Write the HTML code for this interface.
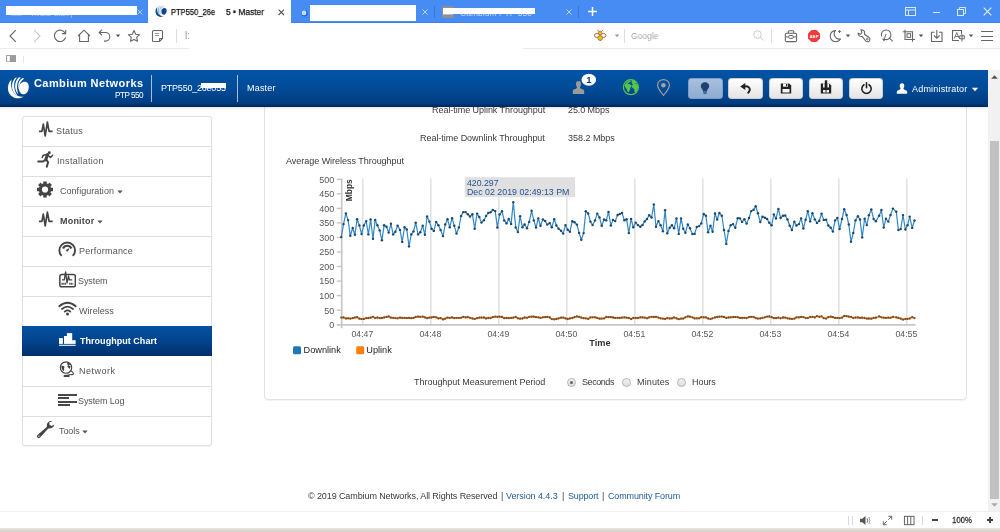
<!DOCTYPE html>
<html><head><meta charset="utf-8"><title>PTP550 • Master</title>
<style>
*{box-sizing:border-box;margin:0;padding:0}
html,body{width:1000px;height:532px;overflow:hidden;background:#fff}
body{position:relative;font-family:"Liberation Sans",sans-serif;font-size:11px;color:#333}
.abs{position:absolute}
.t{position:absolute;white-space:nowrap;line-height:1;will-change:transform}
/* browser chrome */
#tabbar{left:0;top:0;width:1000px;height:23px;background:#478cf2;border-bottom:1px solid #3a82ee}
#acttab{left:148px;top:0;width:143px;height:23px;background:#fff}
.red{position:absolute;background:#fff}
#toolbar{left:0;top:23px;width:1000px;height:25px;background:#fff}
.hl{position:absolute;height:1px;background:#ebebeb}
#bm{left:0;top:49px;width:1000px;height:20px;background:#fff}
/* app header */
#hdr{left:0;top:70px;width:988px;height:37px;background:linear-gradient(#0353a6 0%,#024b98 50%,#003c80 90%,#002a60 97%,#002a60 100%);box-shadow:0 1px 2px rgba(0,0,0,.13)}
.sep{position:absolute;width:1px;background:#a9bcd9;top:74.500px;height:27px}
.hbtn{position:absolute;top:78.300px;width:34.300px;height:20.300px;border-radius:3px;background:linear-gradient(#fff,#e4e4e4);border:1px solid #ccc}
/* sidebar */
#side{left:22px;top:115.600px;width:190.400px;height:330.500px;border:1px solid #e0e0e0;border-radius:3px;background:#fff;box-shadow:0 1px 1px rgba(0,0,0,.05)}
.mi{position:absolute;left:0;width:187px;height:30px;border-bottom:1px solid #ddd}
.mi.act{background:linear-gradient(#0a4a9c,#003b80);border-color:#003b80}
/* main panel */
#panel{left:263.500px;top:100px;width:703px;height:299.500px;border:1px solid #e2e2e2;border-radius:4px;background:#fff;box-shadow:0 1px 1px rgba(0,0,0,.05)}
/* scrollbar */
#sb{left:988px;top:70px;width:12px;height:441px;background:#f1f1f1}
#thumb{left:990px;top:141px;width:9px;height:358px;background:#c1c1c1}
/* status bar */
#status{left:0;top:511px;width:1000px;height:17px;background:#fff;border-top:1px solid #f0f0f0}
#bottom{left:0;top:528px;width:1000px;height:4px;background:linear-gradient(#e9e7e4,#d4d0c8)}
a{color:#1d5a9e;text-decoration:none}
svg{will-change:transform}
.radio{width:9px;height:9px;border-radius:50%;border:1px solid #b4b4b4;background:linear-gradient(#f4f4f4,#dcdcdc)}
.radio i{position:absolute;left:1.700px;top:1.700px;width:3.600px;height:3.600px;border-radius:50%;background:#606060}
</style></head>
<body>
<!-- ===== browser chrome ===== -->
<div id="tabbar" class="abs"></div>
<div id="acttab" class="abs"></div>
<!-- tab 1 (inactive, redacted) -->
<div class="t" style="left:30px;top:9.500px;font-size:7.300px;color:#b4cdf9;letter-spacing:0">Vivaldi Start |</div>
<svg class="abs" style="left:11px;top:6px" width="11" height="10" viewBox="0 0 11 10"><rect x="0.5" y="0.5" width="10" height="8.500" fill="none" stroke="#a9c6f8"/></svg>
<div class="red" style="left:6px;top:6px;width:131px;height:8.700px"></div>
<svg class="abs" style="left:136.500px;top:9px" width="6" height="6" viewBox="0 0 6 6"><path d="M.5.5l5 5M5.500.5l-5 5" stroke="#b9d1fa" stroke-width=".9" fill="none"/></svg>
<!-- active tab -->
<svg class="abs" style="left:155px;top:5.400px" width="12.300" height="12.300" viewBox="0 0 23 23"><path d="M4.600 3.600C1.500 6.500.3 10.500 1.200 14.500 2.300 19.500 7 23 12 22.200 14 21.900 15.600 21.400 16.700 20.800 13 21.200 9 20 6.500 16.500 4 13 3.500 8 4.600 3.600z" fill="#0c4a92"/><path d="M8.500 1.800C5 5 4.200 10 5.800 14.500 6.800 17 8.500 18.800 10.500 19.800 8.300 16.500 6.800 12 7.200 8 7.400 5.500 8.200 3.500 10 1.600z" fill="#8fa9d0"/><path d="M12 1.200C8.500 4 7.500 9 8.600 13.500 9.200 15.500 10 17 11.400 18.400 10.200 15 9.600 11 10.400 7.500 10.900 5 12 3 13.800 1.400z" fill="#a9bddb"/><path d="M15.500 2C12.500 3.800 11 7 11.200 10.500 11.300 12 11.600 13 12.100 14 12 11 12.500 8 14 5.800 15 4.300 16 3.400 17.300 2.700z" fill="#b9c9e2"/><path d="M16 6C19 5.200 21.600 6.800 21.800 10 22 13.500 20.500 17.500 17.500 18.200 14.500 18.800 12.200 16.500 12 13 11.800 9.500 13.300 6.700 16 6z" fill="#0a4690"/></svg>
<div class="t" id="tab_a" style="left:171px;top:8px;font-size:8.500px;color:#111;-webkit-text-stroke:.25px #111;transform-origin:0 0;transform:scaleX(.887)">PTP550_26e</div>
<div class="t" id="tab_b" style="left:226px;top:8px;font-size:8.500px;color:#111;-webkit-text-stroke:.25px #111;transform-origin:0 0;transform:scaleX(.99)">5 • Master</div>
<div class="red" style="left:215px;top:3px;width:11px;height:16px"></div>
<svg class="abs" style="left:278px;top:9px" width="7" height="7" viewBox="0 0 7 7"><path d="M.6.600l5.400 5.400M6 .6L.6 6" stroke="#555" stroke-width="1.100" fill="none"/></svg>
<!-- tab 3 -->
<svg class="abs" style="left:300.800px;top:7.400px" width="7" height="9.800" viewBox="0 0 7 9.800"><path d="M3.500 .2C4.600 2.200 6.700 4 6.700 6.200A3.200 3.300 0 0 1 .3 6.200C.3 4 2.400 2.200 3.500 .2z" fill="#2b62dc"/><path d="M3.500 .2C4.300 1.700 5.300 2.800 5.900 4 4.500 3 2.800 3 1.300 3.800 2 2.500 2.900 1.400 3.500 .2z" fill="#3aa2f2"/><circle cx="3" cy="5.900" r="2.300" fill="#d6edfb"/><path d="M4.300 5H2.600a1.100 1.100 0 0 0 0 2h1.500" stroke="#8cc4f3" stroke-width=".7" fill="none"/></svg>
<div class="red" style="left:309.500px;top:5px;width:106.500px;height:16px"></div>
<svg class="abs" style="left:422.300px;top:8.500px" width="6" height="6" viewBox="0 0 6 6"><path d="M.4.400l5.200 5.200M5.600.4L.4 5.600" stroke="#c6d9fb" stroke-width=".9" fill="none"/></svg>
<div class="abs" style="left:434px;top:6px;width:1px;height:12px;background:#3b78d8"></div>
<!-- tab 4 -->
<svg class="abs" style="left:442px;top:6px" width="12" height="12" viewBox="0 0 12 12"><rect x="0" y="0" width="12" height="12" fill="#8a8f98"/><path d="M1 8h10M3 6.500c1-1 2-1 3 0s2 1 3 0" stroke="#e8e8e8" stroke-width="1" fill="none"/></svg>
<div class="t" id="tab_d" style="left:460px;top:9px;font-size:8.500px;color:#c9dcfb;letter-spacing:0.023px">Cambium PTP 550</div>
<div class="red" style="left:443px;top:8px;width:92px;height:5.500px"></div>
<svg class="abs" style="left:566.300px;top:8.500px" width="6" height="6" viewBox="0 0 6 6"><path d="M.4.400l5.200 5.200M5.600.4L.4 5.600" stroke="#c6d9fb" stroke-width=".9" fill="none"/></svg>
<div class="abs" style="left:578px;top:6px;width:1px;height:12px;background:#3b78d8"></div>
<svg class="abs" style="left:588px;top:7px" width="9" height="9" viewBox="0 0 9 9"><path d="M4.500 0v9M0 4.500h9" stroke="#fff" stroke-width="1.500" fill="none"/></svg>
<!-- window controls -->
<svg class="abs" style="left:905px;top:7px" width="11" height="9" viewBox="0 0 11 9"><rect x=".5" y=".5" width="10" height="8" fill="none" stroke="#dbe7fc"/><path d="M.5 3h10M3.500 3v5.500" stroke="#dbe7fc" fill="none"/></svg>
<div class="abs" style="left:933px;top:12px;width:7px;height:1px;background:#dbe7fc"></div>
<svg class="abs" style="left:957px;top:7px" width="10" height="9" viewBox="0 0 10 9"><rect x=".5" y="2.500" width="6" height="6" fill="none" stroke="#dbe7fc"/><path d="M2.500 2.500V.5h6v6h-2" stroke="#dbe7fc" fill="none"/></svg>
<svg class="abs" style="left:983px;top:7px" width="9" height="9" viewBox="0 0 9 9"><path d="M.7.700l7.600 7.600M8.300.700L.7 8.300" stroke="#e6effd" stroke-width="1.100" fill="none"/></svg>

<div id="toolbar" class="abs"></div>
<div class="hl" style="left:0;top:48px;width:189px"></div>
<div class="hl" style="left:523px;top:48px;width:477px"></div>
<div id="bm" class="abs"></div>
<!-- left nav icons -->
<svg class="abs" style="left:8px;top:28px" width="10" height="16" viewBox="0 0 10 16"><path d="M7.800 2.200L2 8l5.800 5.800" stroke="#666" stroke-width="1.100" fill="none"/></svg>
<svg class="abs" style="left:32px;top:28px" width="10" height="16" viewBox="0 0 10 16"><path d="M2.200 2.200L8 8l-5.800 5.800" stroke="#c6c6c6" stroke-width="1.100" fill="none"/></svg>
<svg class="abs" style="left:52px;top:28px" width="16" height="16" viewBox="0 0 16 16"><path d="M13.200 5.200A5.700 5.700 0 1 0 13.600 9.500" stroke="#666" stroke-width="1.100" fill="none"/><path d="M13.700 2v3.600h-3.600" stroke="#666" stroke-width="1.100" fill="none"/></svg>
<svg class="abs" style="left:76px;top:28px" width="16" height="16" viewBox="0 0 16 16"><path d="M2 8l6-5.800L14 8M3.600 6.800v6.700h8.800V6.800" stroke="#666" stroke-width="1.100" fill="none"/></svg>
<svg class="abs" style="left:97px;top:28px" width="16" height="16" viewBox="0 0 16 16"><path d="M2.200 4.500h6.300a4.300 4.300 0 0 1 0 8.600H7" stroke="#666" stroke-width="1.100" fill="none"/><path d="M5 1.700L2.200 4.500 5 7.300" stroke="#666" stroke-width="1.100" fill="none"/></svg>
<svg class="abs" style="left:115px;top:34px" width="6" height="4" viewBox="0 0 6 4"><path d="M.8.500h4.400L3 3.300z" fill="#555"/></svg>
<svg class="abs" style="left:126px;top:28px" width="16" height="16" viewBox="0 0 16 16"><path d="M8 2.600l1.700 3.600 3.900.5-2.900 2.700.8 3.900L8 11.400l-3.500 1.900.8-3.900-2.900-2.700 3.900-.5z" stroke="#666" stroke-width="1.100" fill="none" stroke-linejoin="round"/></svg>
<svg class="abs" style="left:150px;top:28px" width="16" height="16" viewBox="0 0 16 16"><path d="M3.500 2.500h8a1 1 0 0 1 1 1v7l-3 3h-6a1 1 0 0 1-1-1v-9a1 1 0 0 1 1-1z" stroke="#666" stroke-width="1.100" fill="none"/><path d="M12.500 10.500h-3v3" stroke="#666" stroke-width="1" fill="none"/><path d="M4.800 5.500h4.400M4.800 7.500h4.400" stroke="#999" stroke-width="1" fill="none"/></svg>
<div class="abs" style="left:176px;top:29px;width:1px;height:14px;background:#ddd"></div>
<div class="t" style="left:185px;top:31px;font-size:10px;color:#9a9a9a">l:</div>
<div class="red" style="left:189px;top:24px;width:334px;height:25px"></div>
<!-- bookmark bar -->
<svg class="abs" style="left:6px;top:55.400px" width="10" height="7.300" viewBox="0 0 10 7.300"><rect x=".5" y=".5" width="9" height="6.300" fill="#fff" stroke="#a4a4a4"/><rect x="3.800" y=".3" width="6.200" height="6.700" fill="#9c9c9c"/></svg>
<div class="abs" style="left:23px;top:56px;width:1px;height:7px;background:#e6e6e6"></div>
<!-- right side: search field + extensions -->
<svg class="abs" style="left:593px;top:29px" width="14" height="13" viewBox="0 0 14 13"><path d="M5.900 2.600L4.500.9M8.500 2.600L9.900.9" stroke="#9a5f44" stroke-width=".9" fill="none"/><ellipse cx="4.100" cy="6.500" rx="2.700" ry="2" fill="#fff" stroke="#9a5f44" stroke-width=".9"/><ellipse cx="10.300" cy="6.500" rx="2.700" ry="2" fill="#fff" stroke="#9a5f44" stroke-width=".9"/><circle cx="7.200" cy="4" r="1.900" fill="#f5c400" stroke="#9a5f44" stroke-width=".7"/><ellipse cx="7.200" cy="9" rx="2.500" ry="2.300" fill="#f5c400" stroke="#9a5f44" stroke-width=".7"/><path d="M6 11l1.200 1 1.200-1z" fill="#9a5f44"/></svg>
<svg class="abs" style="left:614px;top:34px" width="6" height="4" viewBox="0 0 6 4"><path d="M.8.500h4.400L3 3.300z" fill="#999"/></svg>
<div class="abs" style="left:624px;top:29px;width:1px;height:14px;background:#ddd"></div>
<div class="t" id="goog" style="left:631px;top:32px;font-size:9px;color:#a8a8a8;transform-origin:0 0;transform:scaleX(.946)">Google</div>
<svg class="abs" style="left:752px;top:29px" width="14" height="14" viewBox="0 0 14 14"><circle cx="5.500" cy="5.500" r="3.800" stroke="#c8c8c8" stroke-width="1" fill="none"/><path d="M8.300 8.300l3.200 3.200" stroke="#c8c8c8" stroke-width="1" fill="none"/></svg>
<div class="abs" style="left:771px;top:29px;width:1px;height:14px;background:#ddd"></div>
<svg class="abs" style="left:783px;top:29px" width="16" height="14" viewBox="0 0 16 14"><rect x="2.300" y="4.300" width="11.300" height="8.300" rx="1.200" stroke="#666" stroke-width="1.050" fill="none"/><path d="M5.300 4.300V2.600a.8.800 0 0 1 .8-.8H9.900a.8.800 0 0 1 .8.800V4.300" stroke="#666" stroke-width="1.050" fill="none"/><path d="M2.300 7.900H5.800M10.100 7.900h3.500" stroke="#666" stroke-width="1" fill="none"/><rect x="5.800" y="6.500" width="4.300" height="2.900" rx=".9" stroke="#666" stroke-width="1" fill="none"/></svg>
<svg class="abs" style="left:807px;top:29px" width="14" height="14" viewBox="0 0 14 14"><path d="M4.500 1h5L13 4.500v5L9.500 13h-5L1 9.500v-5z" fill="#f23c3c"/><text x="7" y="8.800" font-family="Liberation Sans, sans-serif" font-size="4.300" font-weight="bold" fill="#fff" text-anchor="middle">ABP</text></svg>
<svg class="abs" style="left:828px;top:29px" width="15" height="14" viewBox="0 0 15 14"><path d="M7.500 1.500A5.600 5.600 0 1 0 12.500 10 5.200 5.200 0 0 1 7.500 1.500z" stroke="#666" stroke-width="1.100" fill="none" stroke-linejoin="round"/><path d="M11.500 1v3M10 2.500h3" stroke="#666" stroke-width=".9" fill="none"/></svg>
<svg class="abs" style="left:845px;top:34px" width="6" height="4" viewBox="0 0 6 4"><path d="M.8.500h4.400L3 3.300z" fill="#555"/></svg>
<svg class="abs" style="left:857px;top:29px" width="15" height="14" viewBox="0 0 15 14"><path d="M3.900 1C6 .5 8 2 7.600 4.200L7.400 5.200 11.800 8.300A2.450 2.450 0 1 1 8.500 11.800L5.200 7.400C3 8 1 6.500 1 4.100L3.300 5.300 5 3.600z" stroke="#666" stroke-width="1.050" fill="none" stroke-linejoin="round"/><circle cx="10.300" cy="10.100" r=".9" stroke="#666" stroke-width=".9" fill="none"/></svg>
<svg class="abs" style="left:880px;top:29px" width="15" height="14" viewBox="0 0 15 14"><path d="M1.590 7.440A4.800 4.800 0 1 1 4.400 10.300" stroke="#666" stroke-width="1.050" fill="none"/><path d="M9.500 9.200l3.200 3.200" stroke="#666" stroke-width="1.050" fill="none"/><path d="M6 5L3.900 11" stroke="#666" stroke-width="1" fill="none"/><path d="M1.900 9.600l1.800 2.600 2.300-2z" fill="#666"/></svg>
<svg class="abs" style="left:902px;top:29px" width="14" height="14" viewBox="0 0 14 14"><path d="M3 .8v9.700h10M.8 2.700h9.700v10" stroke="#666" stroke-width="1.100" fill="none"/><rect x="5" y="4.700" width="3.600" height="3.600" stroke="#666" stroke-width="1" fill="none"/></svg>
<svg class="abs" style="left:918px;top:34px" width="6" height="4" viewBox="0 0 6 4"><path d="M.8.500h4.400L3 3.300z" fill="#555"/></svg>
<svg class="abs" style="left:930px;top:29px" width="14" height="14" viewBox="0 0 14 14"><path d="M4.500 3.200H1.500v9.300h10.500V3.200H9" stroke="#666" stroke-width="1.100" fill="none"/><path d="M6.800 1v8M4 6.500l2.800 2.800 2.800-2.800" stroke="#666" stroke-width="1.100" fill="none"/></svg>
<svg class="abs" style="left:951px;top:29px" width="15" height="14" viewBox="0 0 15 14"><path d="M10.500 5V1.500H1.500v10H8" stroke="#666" stroke-width="1.100" fill="none"/><path d="M3.300 9.500L5.800 3.500l2.500 6M4.200 7.500h3.300" stroke="#777" stroke-width="1" fill="none"/><path d="M8.700 6.800h4.600v3H8.700zM11 5.200v7.300" stroke="#666" stroke-width="1" fill="none"/></svg>
<svg class="abs" style="left:968px;top:34px" width="6" height="4" viewBox="0 0 6 4"><path d="M.8.500h4.400L3 3.300z" fill="#555"/></svg>
<div class="abs" style="left:981px;top:31px;width:12px;height:1px;background:#666"></div>
<div class="abs" style="left:981px;top:36px;width:12px;height:1px;background:#666"></div>
<div class="abs" style="left:981px;top:40px;width:12px;height:1px;background:#666"></div>

<!-- ===== page ===== -->
<div id="panel" class="abs"></div>
<div class="t" id="m_ul" style="left:432px;top:106.2px;font-size:9px;color:#3a3a3a;letter-spacing:-0.044px">Real-time Uplink Throughput</div>
<div class="t" id="m_ulv" style="left:567.5px;top:106.2px;font-size:9px;color:#3a3a3a;letter-spacing:-0.081px">25.0 Mbps</div>
<div class="t" id="m_dl" style="left:420.4px;top:133.8px;font-size:9px;color:#3a3a3a;letter-spacing:-0.038px">Real-time Downlink Throughput</div>
<div class="t" id="m_dlv" style="left:567.5px;top:133.8px;font-size:9px;color:#3a3a3a;letter-spacing:-0.023px">358.2 Mbps</div>
<div class="t" id="m_avg" style="left:286px;top:156.9px;font-size:9px;color:#3a3a3a;letter-spacing:-0.027px">Average Wireless Throughput</div>
<div class="t" id="m_per" style="left:413.9px;top:378px;font-size:9px;color:#3a3a3a;letter-spacing:-0.027px">Throughput Measurement Period</div>
<div class="abs radio" style="left:567px;top:378px"><i></i></div>
<div class="t" id="m_sec" style="left:582.4px;top:378px;font-size:9px;color:#3a3a3a;letter-spacing:-0.433px">Seconds</div>
<div class="abs radio" style="left:622px;top:378px"></div>
<div class="t" id="m_min" style="left:636.8px;top:378px;font-size:9px;color:#3a3a3a;letter-spacing:0.141px">Minutes</div>
<div class="abs radio" style="left:677px;top:378px"></div>
<div class="t" id="m_hr" style="left:691.5px;top:378px;font-size:9px;color:#3a3a3a;letter-spacing:-0.063px">Hours</div>
<div class="t" id="f1" style="left:307.6px;top:491.700px;font-size:9px;color:#3a3a3a;letter-spacing:-0.098px">© 2019 Cambium Networks, All Rights Reserved</div>
<div class="t" id="f2" style="left:500.800px;top:491.700px;font-size:9px;color:#3a3a3a">|</div>
<div class="t" id="f3" style="left:506.4px;top:491.700px;font-size:9px;color:#1f5c99;letter-spacing:-0.073px">Version 4.4.3</div>
<div class="t" id="f4" style="left:561.600px;top:491.700px;font-size:9px;color:#3a3a3a">|</div>
<div class="t" id="f5" style="left:568px;top:491.700px;font-size:9px;color:#1f5c99;letter-spacing:-0.162px">Support</div>
<div class="t" id="f6" style="left:601.600px;top:491.700px;font-size:9px;color:#3a3a3a">|</div>
<div class="t" id="f7" style="left:608px;top:491.700px;font-size:9px;color:#1f5c99;letter-spacing:-0.134px">Community Forum</div>

<svg class="abs" style="left:280px;top:170px" width="660" height="195" viewBox="280 170 660 195" font-family="Liberation Sans, sans-serif">
<line x1="362.8" y1="178.500" x2="362.8" y2="324.500" stroke="#dedede" stroke-width="1.400"/>
<line x1="430.8" y1="178.500" x2="430.8" y2="324.500" stroke="#dedede" stroke-width="1.400"/>
<line x1="498.8" y1="178.500" x2="498.8" y2="324.500" stroke="#dedede" stroke-width="1.400"/>
<line x1="566.8" y1="178.500" x2="566.8" y2="324.500" stroke="#dedede" stroke-width="1.400"/>
<line x1="634.8" y1="178.500" x2="634.8" y2="324.500" stroke="#dedede" stroke-width="1.400"/>
<line x1="702.8" y1="178.500" x2="702.8" y2="324.500" stroke="#dedede" stroke-width="1.400"/>
<line x1="770.8" y1="178.500" x2="770.8" y2="324.500" stroke="#dedede" stroke-width="1.400"/>
<line x1="838.8" y1="178.500" x2="838.8" y2="324.500" stroke="#dedede" stroke-width="1.400"/>
<line x1="906.8" y1="178.500" x2="906.8" y2="324.500" stroke="#dedede" stroke-width="1.400"/>
<path d="M341.700 178.600V328.200M336.800 324.9H915.500" stroke="#c6c6c6" stroke-width="1.600" fill="none"/>
<line x1="336.800" y1="310.2" x2="341.700" y2="310.2" stroke="#c6c6c6" stroke-width="1.400"/>
<line x1="336.800" y1="295.6" x2="341.700" y2="295.6" stroke="#c6c6c6" stroke-width="1.400"/>
<line x1="336.800" y1="281.1" x2="341.700" y2="281.1" stroke="#c6c6c6" stroke-width="1.400"/>
<line x1="336.800" y1="266.5" x2="341.700" y2="266.5" stroke="#c6c6c6" stroke-width="1.400"/>
<line x1="336.800" y1="252.0" x2="341.700" y2="252.0" stroke="#c6c6c6" stroke-width="1.400"/>
<line x1="336.800" y1="237.5" x2="341.700" y2="237.5" stroke="#c6c6c6" stroke-width="1.400"/>
<line x1="336.800" y1="222.9" x2="341.700" y2="222.9" stroke="#c6c6c6" stroke-width="1.400"/>
<line x1="336.800" y1="208.4" x2="341.700" y2="208.4" stroke="#c6c6c6" stroke-width="1.400"/>
<line x1="336.800" y1="193.8" x2="341.700" y2="193.8" stroke="#c6c6c6" stroke-width="1.400"/>
<line x1="336.800" y1="179.3" x2="341.700" y2="179.3" stroke="#c6c6c6" stroke-width="1.400"/>
<text x="334.300" y="328.0" font-size="9" fill="#585858" text-anchor="end">0</text>
<text x="334.300" y="313.5" font-size="9" fill="#585858" text-anchor="end">50</text>
<text x="334.300" y="298.9" font-size="9" fill="#585858" text-anchor="end">100</text>
<text x="334.300" y="284.4" font-size="9" fill="#585858" text-anchor="end">150</text>
<text x="334.300" y="269.8" font-size="9" fill="#585858" text-anchor="end">200</text>
<text x="334.300" y="255.3" font-size="9" fill="#585858" text-anchor="end">250</text>
<text x="334.300" y="240.8" font-size="9" fill="#585858" text-anchor="end">300</text>
<text x="334.300" y="226.2" font-size="9" fill="#585858" text-anchor="end">350</text>
<text x="334.300" y="211.7" font-size="9" fill="#585858" text-anchor="end">400</text>
<text x="334.300" y="197.1" font-size="9" fill="#585858" text-anchor="end">450</text>
<text x="334.300" y="182.6" font-size="9" fill="#585858" text-anchor="end">500</text>
<text x="362.40000000000003" y="336.800" font-size="8.700" fill="#585858" text-anchor="middle">04:47</text>
<text x="430.40000000000003" y="336.800" font-size="8.700" fill="#585858" text-anchor="middle">04:48</text>
<text x="498.40000000000003" y="336.800" font-size="8.700" fill="#585858" text-anchor="middle">04:49</text>
<text x="566.4" y="336.800" font-size="8.700" fill="#585858" text-anchor="middle">04:50</text>
<text x="634.4" y="336.800" font-size="8.700" fill="#585858" text-anchor="middle">04:51</text>
<text x="702.4" y="336.800" font-size="8.700" fill="#585858" text-anchor="middle">04:52</text>
<text x="770.4" y="336.800" font-size="8.700" fill="#585858" text-anchor="middle">04:53</text>
<text x="838.4" y="336.800" font-size="8.700" fill="#585858" text-anchor="middle">04:54</text>
<text x="906.4" y="336.800" font-size="8.700" fill="#585858" text-anchor="middle">04:55</text>
<text x="600" y="345.800" font-size="9.200" font-weight="bold" fill="#333" text-anchor="middle">Time</text>
<text transform="translate(352.300,201.200) rotate(-90)" font-size="9.300" font-weight="bold" fill="#333" textLength="22" lengthAdjust="spacingAndGlyphs">Mbps</text>
<rect x="464.800" y="177.200" width="110.200" height="20" fill="#e0e0e0"/>
<text x="467" y="186.400" font-size="8.800" fill="#25528f" id="tt1" textLength="31.600" lengthAdjust="spacingAndGlyphs">420.297</text>
<text x="467" y="194.800" font-size="8.800" fill="#25528f" id="tt2" textLength="102.400" lengthAdjust="spacingAndGlyphs">Dec 02 2019 02:49:13 PM</text>
<polyline fill="none" stroke="#f5831c" stroke-width="1.700" stroke-linejoin="round" points="341.3,317.6 343.5,317.4 345.9,318.5 348.1,318.3 350.3,318.6 352.7,318.2 354.9,317.6 357.1,317.2 359.4,318.7 361.6,319.1 363.8,318.9 366.2,318.2 368.4,318.0 370.6,317.7 373.0,316.8 375.2,318.1 377.4,317.5 379.7,318.2 381.9,318.0 384.1,317.5 386.5,316.9 388.7,316.4 390.9,317.7 393.2,317.8 395.4,318.1 397.6,318.3 400.0,317.6 402.2,317.9 404.6,317.9 406.8,318.1 409.0,317.9 411.3,318.2 413.5,317.9 415.7,316.9 418.1,316.6 420.3,316.8 422.7,316.6 424.9,317.4 427.1,318.2 429.4,317.7 431.6,317.5 433.8,316.9 436.2,317.3 438.4,318.4 440.6,318.1 443.0,319.4 445.2,318.7 447.5,317.6 449.7,317.9 452.1,317.4 454.3,318.2 456.5,317.9 458.9,317.8 461.1,317.8 463.3,316.9 465.6,317.4 467.8,317.1 470.0,317.8 472.4,318.5 474.7,318.9 477.1,318.2 479.3,317.6 481.5,317.7 483.9,317.5 486.1,318.5 488.3,318.0 490.6,318.0 492.8,317.1 495.2,316.6 497.4,316.8 499.6,316.7 502.0,316.9 504.2,318.2 506.5,318.0 508.7,318.2 511.1,317.9 513.3,317.7 515.7,317.0 517.9,318.3 520.1,318.7 522.4,318.5 524.6,317.5 527.0,317.8 529.2,316.9 531.6,316.7 533.8,316.7 536.0,317.2 538.3,317.3 540.5,317.8 542.9,317.3 545.1,317.2 547.3,316.9 549.7,317.5 551.8,319.1 554.2,319.3 556.4,319.0 558.6,318.4 561.0,317.7 563.2,317.6 565.5,318.4 567.7,319.0 569.9,318.4 572.3,318.0 574.5,317.2 576.9,316.4 579.1,316.9 581.3,317.7 583.6,318.2 585.8,318.3 588.2,318.9 590.4,317.4 592.6,317.3 595.0,317.3 597.2,317.9 599.5,318.7 601.7,318.6 604.1,318.4 606.3,317.0 608.5,317.2 610.8,317.2 613.0,317.5 615.2,317.9 617.6,317.8 619.8,317.9 622.0,317.6 624.4,317.3 626.6,317.7 628.8,318.0 631.1,319.0 633.3,318.0 635.7,318.0 637.9,318.0 640.3,317.4 642.5,317.4 644.7,317.7 647.0,318.3 649.2,317.4 651.6,316.8 653.8,317.0 656.0,316.8 658.4,317.6 660.6,318.3 662.9,318.6 665.1,319.0 667.3,318.1 669.7,318.5 671.9,318.4 674.1,317.5 676.5,318.4 678.7,319.2 681.0,318.6 683.2,318.6 685.4,317.3 687.8,316.4 690.0,316.7 692.4,317.3 694.6,318.4 696.8,318.3 699.1,318.3 701.3,317.2 703.7,317.3 705.9,317.4 708.1,318.5 710.5,319.0 712.6,318.3 715.0,317.5 717.2,317.0 719.4,316.6 721.8,316.6 724.0,317.0 726.3,317.9 728.5,317.5 730.7,317.3 733.1,317.2 735.3,317.1 737.7,317.2 739.9,317.9 742.1,318.0 744.4,317.8 746.6,318.1 749.0,317.1 751.2,316.8 753.6,317.0 755.7,318.1 757.9,318.6 760.3,318.4 762.5,317.9 764.9,317.3 767.1,316.6 769.3,316.5 771.6,317.2 773.8,318.2 776.0,318.2 778.4,317.7 780.6,318.3 783.0,317.5 785.2,317.6 787.5,318.3 789.7,318.7 791.9,318.9 794.3,318.7 796.5,317.3 798.9,317.4 801.1,316.9 803.4,317.1 805.6,318.1 807.8,318.1 810.2,317.0 812.4,316.8 814.8,317.4 817.0,316.1 819.3,316.8 821.5,316.3 823.7,318.2 826.1,318.6 828.3,317.2 830.7,316.7 832.9,317.2 835.1,317.9 837.4,317.8 839.6,318.1 842.0,317.7 844.2,316.0 846.6,316.2 848.8,316.7 851.0,316.8 853.3,318.0 855.5,317.6 857.9,317.4 860.0,317.8 862.2,317.7 864.6,318.0 866.8,318.6 868.9,318.5 871.3,318.7 873.6,317.9 875.9,317.7 879.2,316.4 881.4,317.3 883.7,317.7 885.9,317.9 888.3,317.6 890.5,317.8 892.9,316.9 896.3,317.4 898.4,317.9 900.7,318.6 903.0,319.6 905.4,319.0 907.5,318.8 909.7,318.5 912.2,317.2 914.5,318.1"/>
<g fill="#7d4e26"><circle cx="341.3" cy="317.6" r="1.150"/><circle cx="343.5" cy="317.4" r="1.150"/><circle cx="345.9" cy="318.5" r="1.150"/><circle cx="348.1" cy="318.3" r="1.150"/><circle cx="350.3" cy="318.6" r="1.150"/><circle cx="352.7" cy="318.2" r="1.150"/><circle cx="354.9" cy="317.6" r="1.150"/><circle cx="357.1" cy="317.2" r="1.150"/><circle cx="359.4" cy="318.7" r="1.150"/><circle cx="361.6" cy="319.1" r="1.150"/><circle cx="363.8" cy="318.9" r="1.150"/><circle cx="366.2" cy="318.2" r="1.150"/><circle cx="368.4" cy="318.0" r="1.150"/><circle cx="370.6" cy="317.7" r="1.150"/><circle cx="373.0" cy="316.8" r="1.150"/><circle cx="375.2" cy="318.1" r="1.150"/><circle cx="377.4" cy="317.5" r="1.150"/><circle cx="379.7" cy="318.2" r="1.150"/><circle cx="381.9" cy="318.0" r="1.150"/><circle cx="384.1" cy="317.5" r="1.150"/><circle cx="386.5" cy="316.9" r="1.150"/><circle cx="388.7" cy="316.4" r="1.150"/><circle cx="390.9" cy="317.7" r="1.150"/><circle cx="393.2" cy="317.8" r="1.150"/><circle cx="395.4" cy="318.1" r="1.150"/><circle cx="397.6" cy="318.3" r="1.150"/><circle cx="400.0" cy="317.6" r="1.150"/><circle cx="402.2" cy="317.9" r="1.150"/><circle cx="404.6" cy="317.9" r="1.150"/><circle cx="406.8" cy="318.1" r="1.150"/><circle cx="409.0" cy="317.9" r="1.150"/><circle cx="411.3" cy="318.2" r="1.150"/><circle cx="413.5" cy="317.9" r="1.150"/><circle cx="415.7" cy="316.9" r="1.150"/><circle cx="418.1" cy="316.6" r="1.150"/><circle cx="420.3" cy="316.8" r="1.150"/><circle cx="422.7" cy="316.6" r="1.150"/><circle cx="424.9" cy="317.4" r="1.150"/><circle cx="427.1" cy="318.2" r="1.150"/><circle cx="429.4" cy="317.7" r="1.150"/><circle cx="431.6" cy="317.5" r="1.150"/><circle cx="433.8" cy="316.9" r="1.150"/><circle cx="436.2" cy="317.3" r="1.150"/><circle cx="438.4" cy="318.4" r="1.150"/><circle cx="440.6" cy="318.1" r="1.150"/><circle cx="443.0" cy="319.4" r="1.150"/><circle cx="445.2" cy="318.7" r="1.150"/><circle cx="447.5" cy="317.6" r="1.150"/><circle cx="449.7" cy="317.9" r="1.150"/><circle cx="452.1" cy="317.4" r="1.150"/><circle cx="454.3" cy="318.2" r="1.150"/><circle cx="456.5" cy="317.9" r="1.150"/><circle cx="458.9" cy="317.8" r="1.150"/><circle cx="461.1" cy="317.8" r="1.150"/><circle cx="463.3" cy="316.9" r="1.150"/><circle cx="465.6" cy="317.4" r="1.150"/><circle cx="467.8" cy="317.1" r="1.150"/><circle cx="470.0" cy="317.8" r="1.150"/><circle cx="472.4" cy="318.5" r="1.150"/><circle cx="474.7" cy="318.9" r="1.150"/><circle cx="477.1" cy="318.2" r="1.150"/><circle cx="479.3" cy="317.6" r="1.150"/><circle cx="481.5" cy="317.7" r="1.150"/><circle cx="483.9" cy="317.5" r="1.150"/><circle cx="486.1" cy="318.5" r="1.150"/><circle cx="488.3" cy="318.0" r="1.150"/><circle cx="490.6" cy="318.0" r="1.150"/><circle cx="492.8" cy="317.1" r="1.150"/><circle cx="495.2" cy="316.6" r="1.150"/><circle cx="497.4" cy="316.8" r="1.150"/><circle cx="499.6" cy="316.7" r="1.150"/><circle cx="502.0" cy="316.9" r="1.150"/><circle cx="504.2" cy="318.2" r="1.150"/><circle cx="506.5" cy="318.0" r="1.150"/><circle cx="508.7" cy="318.2" r="1.150"/><circle cx="511.1" cy="317.9" r="1.150"/><circle cx="513.3" cy="317.7" r="1.150"/><circle cx="515.7" cy="317.0" r="1.150"/><circle cx="517.9" cy="318.3" r="1.150"/><circle cx="520.1" cy="318.7" r="1.150"/><circle cx="522.4" cy="318.5" r="1.150"/><circle cx="524.6" cy="317.5" r="1.150"/><circle cx="527.0" cy="317.8" r="1.150"/><circle cx="529.2" cy="316.9" r="1.150"/><circle cx="531.6" cy="316.7" r="1.150"/><circle cx="533.8" cy="316.7" r="1.150"/><circle cx="536.0" cy="317.2" r="1.150"/><circle cx="538.3" cy="317.3" r="1.150"/><circle cx="540.5" cy="317.8" r="1.150"/><circle cx="542.9" cy="317.3" r="1.150"/><circle cx="545.1" cy="317.2" r="1.150"/><circle cx="547.3" cy="316.9" r="1.150"/><circle cx="549.7" cy="317.5" r="1.150"/><circle cx="551.8" cy="319.1" r="1.150"/><circle cx="554.2" cy="319.3" r="1.150"/><circle cx="556.4" cy="319.0" r="1.150"/><circle cx="558.6" cy="318.4" r="1.150"/><circle cx="561.0" cy="317.7" r="1.150"/><circle cx="563.2" cy="317.6" r="1.150"/><circle cx="565.5" cy="318.4" r="1.150"/><circle cx="567.7" cy="319.0" r="1.150"/><circle cx="569.9" cy="318.4" r="1.150"/><circle cx="572.3" cy="318.0" r="1.150"/><circle cx="574.5" cy="317.2" r="1.150"/><circle cx="576.9" cy="316.4" r="1.150"/><circle cx="579.1" cy="316.9" r="1.150"/><circle cx="581.3" cy="317.7" r="1.150"/><circle cx="583.6" cy="318.2" r="1.150"/><circle cx="585.8" cy="318.3" r="1.150"/><circle cx="588.2" cy="318.9" r="1.150"/><circle cx="590.4" cy="317.4" r="1.150"/><circle cx="592.6" cy="317.3" r="1.150"/><circle cx="595.0" cy="317.3" r="1.150"/><circle cx="597.2" cy="317.9" r="1.150"/><circle cx="599.5" cy="318.7" r="1.150"/><circle cx="601.7" cy="318.6" r="1.150"/><circle cx="604.1" cy="318.4" r="1.150"/><circle cx="606.3" cy="317.0" r="1.150"/><circle cx="608.5" cy="317.2" r="1.150"/><circle cx="610.8" cy="317.2" r="1.150"/><circle cx="613.0" cy="317.5" r="1.150"/><circle cx="615.2" cy="317.9" r="1.150"/><circle cx="617.6" cy="317.8" r="1.150"/><circle cx="619.8" cy="317.9" r="1.150"/><circle cx="622.0" cy="317.6" r="1.150"/><circle cx="624.4" cy="317.3" r="1.150"/><circle cx="626.6" cy="317.7" r="1.150"/><circle cx="628.8" cy="318.0" r="1.150"/><circle cx="631.1" cy="319.0" r="1.150"/><circle cx="633.3" cy="318.0" r="1.150"/><circle cx="635.7" cy="318.0" r="1.150"/><circle cx="637.9" cy="318.0" r="1.150"/><circle cx="640.3" cy="317.4" r="1.150"/><circle cx="642.5" cy="317.4" r="1.150"/><circle cx="644.7" cy="317.7" r="1.150"/><circle cx="647.0" cy="318.3" r="1.150"/><circle cx="649.2" cy="317.4" r="1.150"/><circle cx="651.6" cy="316.8" r="1.150"/><circle cx="653.8" cy="317.0" r="1.150"/><circle cx="656.0" cy="316.8" r="1.150"/><circle cx="658.4" cy="317.6" r="1.150"/><circle cx="660.6" cy="318.3" r="1.150"/><circle cx="662.9" cy="318.6" r="1.150"/><circle cx="665.1" cy="319.0" r="1.150"/><circle cx="667.3" cy="318.1" r="1.150"/><circle cx="669.7" cy="318.5" r="1.150"/><circle cx="671.9" cy="318.4" r="1.150"/><circle cx="674.1" cy="317.5" r="1.150"/><circle cx="676.5" cy="318.4" r="1.150"/><circle cx="678.7" cy="319.2" r="1.150"/><circle cx="681.0" cy="318.6" r="1.150"/><circle cx="683.2" cy="318.6" r="1.150"/><circle cx="685.4" cy="317.3" r="1.150"/><circle cx="687.8" cy="316.4" r="1.150"/><circle cx="690.0" cy="316.7" r="1.150"/><circle cx="692.4" cy="317.3" r="1.150"/><circle cx="694.6" cy="318.4" r="1.150"/><circle cx="696.8" cy="318.3" r="1.150"/><circle cx="699.1" cy="318.3" r="1.150"/><circle cx="701.3" cy="317.2" r="1.150"/><circle cx="703.7" cy="317.3" r="1.150"/><circle cx="705.9" cy="317.4" r="1.150"/><circle cx="708.1" cy="318.5" r="1.150"/><circle cx="710.5" cy="319.0" r="1.150"/><circle cx="712.6" cy="318.3" r="1.150"/><circle cx="715.0" cy="317.5" r="1.150"/><circle cx="717.2" cy="317.0" r="1.150"/><circle cx="719.4" cy="316.6" r="1.150"/><circle cx="721.8" cy="316.6" r="1.150"/><circle cx="724.0" cy="317.0" r="1.150"/><circle cx="726.3" cy="317.9" r="1.150"/><circle cx="728.5" cy="317.5" r="1.150"/><circle cx="730.7" cy="317.3" r="1.150"/><circle cx="733.1" cy="317.2" r="1.150"/><circle cx="735.3" cy="317.1" r="1.150"/><circle cx="737.7" cy="317.2" r="1.150"/><circle cx="739.9" cy="317.9" r="1.150"/><circle cx="742.1" cy="318.0" r="1.150"/><circle cx="744.4" cy="317.8" r="1.150"/><circle cx="746.6" cy="318.1" r="1.150"/><circle cx="749.0" cy="317.1" r="1.150"/><circle cx="751.2" cy="316.8" r="1.150"/><circle cx="753.6" cy="317.0" r="1.150"/><circle cx="755.7" cy="318.1" r="1.150"/><circle cx="757.9" cy="318.6" r="1.150"/><circle cx="760.3" cy="318.4" r="1.150"/><circle cx="762.5" cy="317.9" r="1.150"/><circle cx="764.9" cy="317.3" r="1.150"/><circle cx="767.1" cy="316.6" r="1.150"/><circle cx="769.3" cy="316.5" r="1.150"/><circle cx="771.6" cy="317.2" r="1.150"/><circle cx="773.8" cy="318.2" r="1.150"/><circle cx="776.0" cy="318.2" r="1.150"/><circle cx="778.4" cy="317.7" r="1.150"/><circle cx="780.6" cy="318.3" r="1.150"/><circle cx="783.0" cy="317.5" r="1.150"/><circle cx="785.2" cy="317.6" r="1.150"/><circle cx="787.5" cy="318.3" r="1.150"/><circle cx="789.7" cy="318.7" r="1.150"/><circle cx="791.9" cy="318.9" r="1.150"/><circle cx="794.3" cy="318.7" r="1.150"/><circle cx="796.5" cy="317.3" r="1.150"/><circle cx="798.9" cy="317.4" r="1.150"/><circle cx="801.1" cy="316.9" r="1.150"/><circle cx="803.4" cy="317.1" r="1.150"/><circle cx="805.6" cy="318.1" r="1.150"/><circle cx="807.8" cy="318.1" r="1.150"/><circle cx="810.2" cy="317.0" r="1.150"/><circle cx="812.4" cy="316.8" r="1.150"/><circle cx="814.8" cy="317.4" r="1.150"/><circle cx="817.0" cy="316.1" r="1.150"/><circle cx="819.3" cy="316.8" r="1.150"/><circle cx="821.5" cy="316.3" r="1.150"/><circle cx="823.7" cy="318.2" r="1.150"/><circle cx="826.1" cy="318.6" r="1.150"/><circle cx="828.3" cy="317.2" r="1.150"/><circle cx="830.7" cy="316.7" r="1.150"/><circle cx="832.9" cy="317.2" r="1.150"/><circle cx="835.1" cy="317.9" r="1.150"/><circle cx="837.4" cy="317.8" r="1.150"/><circle cx="839.6" cy="318.1" r="1.150"/><circle cx="842.0" cy="317.7" r="1.150"/><circle cx="844.2" cy="316.0" r="1.150"/><circle cx="846.6" cy="316.2" r="1.150"/><circle cx="848.8" cy="316.7" r="1.150"/><circle cx="851.0" cy="316.8" r="1.150"/><circle cx="853.3" cy="318.0" r="1.150"/><circle cx="855.5" cy="317.6" r="1.150"/><circle cx="857.9" cy="317.4" r="1.150"/><circle cx="860.0" cy="317.8" r="1.150"/><circle cx="862.2" cy="317.7" r="1.150"/><circle cx="864.6" cy="318.0" r="1.150"/><circle cx="866.8" cy="318.6" r="1.150"/><circle cx="868.9" cy="318.5" r="1.150"/><circle cx="871.3" cy="318.7" r="1.150"/><circle cx="873.6" cy="317.9" r="1.150"/><circle cx="875.9" cy="317.7" r="1.150"/><circle cx="879.2" cy="316.4" r="1.150"/><circle cx="881.4" cy="317.3" r="1.150"/><circle cx="883.7" cy="317.7" r="1.150"/><circle cx="885.9" cy="317.9" r="1.150"/><circle cx="888.3" cy="317.6" r="1.150"/><circle cx="890.5" cy="317.8" r="1.150"/><circle cx="892.9" cy="316.9" r="1.150"/><circle cx="896.3" cy="317.4" r="1.150"/><circle cx="898.4" cy="317.9" r="1.150"/><circle cx="900.7" cy="318.6" r="1.150"/><circle cx="903.0" cy="319.6" r="1.150"/><circle cx="905.4" cy="319.0" r="1.150"/><circle cx="907.5" cy="318.8" r="1.150"/><circle cx="909.7" cy="318.5" r="1.150"/><circle cx="912.2" cy="317.2" r="1.150"/><circle cx="914.5" cy="318.1" r="1.150"/></g>
<polyline fill="none" stroke="#3187c8" stroke-width="1.200" stroke-linejoin="round" points="341.3,237.1 343.5,224.1 345.9,213.5 348.1,220.1 350.3,235.8 352.7,228.0 354.9,234.8 357.1,219.2 359.4,225.5 361.6,234.1 363.8,225.5 366.2,221.1 368.4,234.4 370.6,219.4 373.0,238.8 375.2,219.9 377.4,225.3 379.7,230.4 381.9,240.3 384.1,225.3 386.5,226.7 388.7,232.6 390.9,223.8 393.2,234.4 395.4,231.7 397.6,225.6 400.0,229.9 402.2,241.9 404.6,227.2 406.8,229.5 409.0,246.4 411.3,234.4 413.5,231.4 415.7,222.8 418.1,234.4 420.3,232.2 422.7,225.8 424.9,234.8 427.1,216.5 429.4,221.6 431.6,228.7 433.8,230.9 436.2,221.9 438.4,225.3 440.6,230.0 443.0,236.1 445.2,224.5 447.5,219.2 449.7,227.2 452.1,218.2 454.3,225.8 456.5,233.6 458.9,227.5 461.1,216.0 463.3,212.1 465.6,212.1 467.8,214.3 470.0,216.5 472.4,214.3 474.7,228.7 477.1,213.6 479.3,217.0 481.5,222.6 483.9,220.2 486.1,216.0 488.3,213.0 490.6,212.3 492.8,209.9 495.2,211.1 497.4,227.5 499.6,214.5 502.0,211.3 504.2,220.4 506.5,223.4 508.7,219.0 511.1,223.9 513.3,202.3 515.7,227.5 517.9,232.1 520.1,216.2 522.4,227.2 524.6,224.5 527.0,228.3 529.2,221.9 531.6,210.8 533.8,220.4 536.0,227.5 538.3,218.4 540.5,225.8 542.9,219.4 545.1,220.9 547.3,224.6 549.7,223.1 551.8,227.2 554.2,219.2 556.4,225.5 558.6,228.7 561.0,230.7 563.2,233.6 565.5,225.1 567.7,229.7 569.9,231.7 572.3,221.2 574.5,222.3 576.9,224.6 579.1,232.9 581.3,239.8 583.6,233.1 585.8,211.3 588.2,213.5 590.4,221.6 592.6,225.1 595.0,220.4 597.2,213.6 599.5,217.4 601.7,225.8 604.1,219.5 606.3,220.4 608.5,211.9 610.8,225.5 613.0,219.9 615.2,221.1 617.6,215.0 619.8,214.0 622.0,213.0 624.4,220.2 626.6,219.2 628.8,233.1 631.1,218.9 633.3,227.2 635.7,222.6 637.9,225.1 640.3,226.7 642.5,225.0 644.7,221.4 647.0,219.0 649.2,215.2 651.6,217.5 653.8,204.5 656.0,226.7 658.4,221.1 660.6,225.3 662.9,231.2 665.1,210.2 667.3,233.2 669.7,227.8 671.9,225.3 674.1,228.3 676.5,218.5 678.7,233.9 681.0,218.4 683.2,228.7 685.4,232.7 687.8,224.5 690.0,228.2 692.4,234.1 694.6,233.9 696.8,227.0 699.1,226.1 701.3,223.4 703.7,214.0 705.9,215.8 708.1,232.2 710.5,225.8 712.6,231.7 715.0,213.5 717.2,219.5 719.4,213.0 721.8,215.7 724.0,230.0 726.3,243.9 728.5,230.9 730.7,225.3 733.1,224.1 735.3,227.7 737.7,218.2 739.9,218.4 742.1,221.9 744.4,219.2 746.6,223.6 749.0,218.0 751.2,211.1 753.6,209.7 755.7,206.2 757.9,213.3 760.3,222.1 762.5,216.7 764.9,217.7 767.1,219.0 769.3,222.8 771.6,225.3 773.8,214.5 776.0,218.5 778.4,208.9 780.6,218.0 783.0,215.7 785.2,215.5 787.5,219.5 789.7,225.8 791.9,230.0 794.3,221.7 796.5,225.5 798.9,224.1 801.1,218.4 803.4,228.5 805.6,219.7 807.8,211.3 810.2,221.4 812.4,213.3 814.8,219.4 817.0,222.9 819.3,220.7 821.5,213.6 823.7,219.9 826.1,219.7 828.3,225.5 830.7,227.8 832.9,231.6 835.1,220.4 837.4,217.9 839.6,229.0 842.0,219.0 844.2,209.2 846.6,215.0 848.8,224.5 851.0,241.7 853.3,232.9 855.5,220.4 857.9,216.2 860.0,219.5 862.2,237.4 864.6,218.8 866.8,225.1 868.9,215.3 871.3,209.5 873.6,219.1 875.9,221.2 879.2,215.8 881.4,209.9 883.7,227.5 885.9,218.8 888.3,221.6 890.5,215.0 892.9,208.6 896.3,211.7 898.4,230.1 900.7,229.1 903.0,215.1 905.4,229.5 907.5,225.3 909.7,216.6 912.2,227.9 914.5,220.5"/>
<g fill="#1f4868"><circle cx="341.3" cy="237.1" r="1.220"/><circle cx="343.5" cy="224.1" r="1.220"/><circle cx="345.9" cy="213.5" r="1.220"/><circle cx="348.1" cy="220.1" r="1.220"/><circle cx="350.3" cy="235.8" r="1.220"/><circle cx="352.7" cy="228.0" r="1.220"/><circle cx="354.9" cy="234.8" r="1.220"/><circle cx="357.1" cy="219.2" r="1.220"/><circle cx="359.4" cy="225.5" r="1.220"/><circle cx="361.6" cy="234.1" r="1.220"/><circle cx="363.8" cy="225.5" r="1.220"/><circle cx="366.2" cy="221.1" r="1.220"/><circle cx="368.4" cy="234.4" r="1.220"/><circle cx="370.6" cy="219.4" r="1.220"/><circle cx="373.0" cy="238.8" r="1.220"/><circle cx="375.2" cy="219.9" r="1.220"/><circle cx="377.4" cy="225.3" r="1.220"/><circle cx="379.7" cy="230.4" r="1.220"/><circle cx="381.9" cy="240.3" r="1.220"/><circle cx="384.1" cy="225.3" r="1.220"/><circle cx="386.5" cy="226.7" r="1.220"/><circle cx="388.7" cy="232.6" r="1.220"/><circle cx="390.9" cy="223.8" r="1.220"/><circle cx="393.2" cy="234.4" r="1.220"/><circle cx="395.4" cy="231.7" r="1.220"/><circle cx="397.6" cy="225.6" r="1.220"/><circle cx="400.0" cy="229.9" r="1.220"/><circle cx="402.2" cy="241.9" r="1.220"/><circle cx="404.6" cy="227.2" r="1.220"/><circle cx="406.8" cy="229.5" r="1.220"/><circle cx="409.0" cy="246.4" r="1.220"/><circle cx="411.3" cy="234.4" r="1.220"/><circle cx="413.5" cy="231.4" r="1.220"/><circle cx="415.7" cy="222.8" r="1.220"/><circle cx="418.1" cy="234.4" r="1.220"/><circle cx="420.3" cy="232.2" r="1.220"/><circle cx="422.7" cy="225.8" r="1.220"/><circle cx="424.9" cy="234.8" r="1.220"/><circle cx="427.1" cy="216.5" r="1.220"/><circle cx="429.4" cy="221.6" r="1.220"/><circle cx="431.6" cy="228.7" r="1.220"/><circle cx="433.8" cy="230.9" r="1.220"/><circle cx="436.2" cy="221.9" r="1.220"/><circle cx="438.4" cy="225.3" r="1.220"/><circle cx="440.6" cy="230.0" r="1.220"/><circle cx="443.0" cy="236.1" r="1.220"/><circle cx="445.2" cy="224.5" r="1.220"/><circle cx="447.5" cy="219.2" r="1.220"/><circle cx="449.7" cy="227.2" r="1.220"/><circle cx="452.1" cy="218.2" r="1.220"/><circle cx="454.3" cy="225.8" r="1.220"/><circle cx="456.5" cy="233.6" r="1.220"/><circle cx="458.9" cy="227.5" r="1.220"/><circle cx="461.1" cy="216.0" r="1.220"/><circle cx="463.3" cy="212.1" r="1.220"/><circle cx="465.6" cy="212.1" r="1.220"/><circle cx="467.8" cy="214.3" r="1.220"/><circle cx="470.0" cy="216.5" r="1.220"/><circle cx="472.4" cy="214.3" r="1.220"/><circle cx="474.7" cy="228.7" r="1.220"/><circle cx="477.1" cy="213.6" r="1.220"/><circle cx="479.3" cy="217.0" r="1.220"/><circle cx="481.5" cy="222.6" r="1.220"/><circle cx="483.9" cy="220.2" r="1.220"/><circle cx="486.1" cy="216.0" r="1.220"/><circle cx="488.3" cy="213.0" r="1.220"/><circle cx="490.6" cy="212.3" r="1.220"/><circle cx="492.8" cy="209.9" r="1.220"/><circle cx="495.2" cy="211.1" r="1.220"/><circle cx="497.4" cy="227.5" r="1.220"/><circle cx="499.6" cy="214.5" r="1.220"/><circle cx="502.0" cy="211.3" r="1.220"/><circle cx="504.2" cy="220.4" r="1.220"/><circle cx="506.5" cy="223.4" r="1.220"/><circle cx="508.7" cy="219.0" r="1.220"/><circle cx="511.1" cy="223.9" r="1.220"/><circle cx="513.3" cy="202.3" r="1.220"/><circle cx="515.7" cy="227.5" r="1.220"/><circle cx="517.9" cy="232.1" r="1.220"/><circle cx="520.1" cy="216.2" r="1.220"/><circle cx="522.4" cy="227.2" r="1.220"/><circle cx="524.6" cy="224.5" r="1.220"/><circle cx="527.0" cy="228.3" r="1.220"/><circle cx="529.2" cy="221.9" r="1.220"/><circle cx="531.6" cy="210.8" r="1.220"/><circle cx="533.8" cy="220.4" r="1.220"/><circle cx="536.0" cy="227.5" r="1.220"/><circle cx="538.3" cy="218.4" r="1.220"/><circle cx="540.5" cy="225.8" r="1.220"/><circle cx="542.9" cy="219.4" r="1.220"/><circle cx="545.1" cy="220.9" r="1.220"/><circle cx="547.3" cy="224.6" r="1.220"/><circle cx="549.7" cy="223.1" r="1.220"/><circle cx="551.8" cy="227.2" r="1.220"/><circle cx="554.2" cy="219.2" r="1.220"/><circle cx="556.4" cy="225.5" r="1.220"/><circle cx="558.6" cy="228.7" r="1.220"/><circle cx="561.0" cy="230.7" r="1.220"/><circle cx="563.2" cy="233.6" r="1.220"/><circle cx="565.5" cy="225.1" r="1.220"/><circle cx="567.7" cy="229.7" r="1.220"/><circle cx="569.9" cy="231.7" r="1.220"/><circle cx="572.3" cy="221.2" r="1.220"/><circle cx="574.5" cy="222.3" r="1.220"/><circle cx="576.9" cy="224.6" r="1.220"/><circle cx="579.1" cy="232.9" r="1.220"/><circle cx="581.3" cy="239.8" r="1.220"/><circle cx="583.6" cy="233.1" r="1.220"/><circle cx="585.8" cy="211.3" r="1.220"/><circle cx="588.2" cy="213.5" r="1.220"/><circle cx="590.4" cy="221.6" r="1.220"/><circle cx="592.6" cy="225.1" r="1.220"/><circle cx="595.0" cy="220.4" r="1.220"/><circle cx="597.2" cy="213.6" r="1.220"/><circle cx="599.5" cy="217.4" r="1.220"/><circle cx="601.7" cy="225.8" r="1.220"/><circle cx="604.1" cy="219.5" r="1.220"/><circle cx="606.3" cy="220.4" r="1.220"/><circle cx="608.5" cy="211.9" r="1.220"/><circle cx="610.8" cy="225.5" r="1.220"/><circle cx="613.0" cy="219.9" r="1.220"/><circle cx="615.2" cy="221.1" r="1.220"/><circle cx="617.6" cy="215.0" r="1.220"/><circle cx="619.8" cy="214.0" r="1.220"/><circle cx="622.0" cy="213.0" r="1.220"/><circle cx="624.4" cy="220.2" r="1.220"/><circle cx="626.6" cy="219.2" r="1.220"/><circle cx="628.8" cy="233.1" r="1.220"/><circle cx="631.1" cy="218.9" r="1.220"/><circle cx="633.3" cy="227.2" r="1.220"/><circle cx="635.7" cy="222.6" r="1.220"/><circle cx="637.9" cy="225.1" r="1.220"/><circle cx="640.3" cy="226.7" r="1.220"/><circle cx="642.5" cy="225.0" r="1.220"/><circle cx="644.7" cy="221.4" r="1.220"/><circle cx="647.0" cy="219.0" r="1.220"/><circle cx="649.2" cy="215.2" r="1.220"/><circle cx="651.6" cy="217.5" r="1.220"/><circle cx="653.8" cy="204.5" r="1.220"/><circle cx="656.0" cy="226.7" r="1.220"/><circle cx="658.4" cy="221.1" r="1.220"/><circle cx="660.6" cy="225.3" r="1.220"/><circle cx="662.9" cy="231.2" r="1.220"/><circle cx="665.1" cy="210.2" r="1.220"/><circle cx="667.3" cy="233.2" r="1.220"/><circle cx="669.7" cy="227.8" r="1.220"/><circle cx="671.9" cy="225.3" r="1.220"/><circle cx="674.1" cy="228.3" r="1.220"/><circle cx="676.5" cy="218.5" r="1.220"/><circle cx="678.7" cy="233.9" r="1.220"/><circle cx="681.0" cy="218.4" r="1.220"/><circle cx="683.2" cy="228.7" r="1.220"/><circle cx="685.4" cy="232.7" r="1.220"/><circle cx="687.8" cy="224.5" r="1.220"/><circle cx="690.0" cy="228.2" r="1.220"/><circle cx="692.4" cy="234.1" r="1.220"/><circle cx="694.6" cy="233.9" r="1.220"/><circle cx="696.8" cy="227.0" r="1.220"/><circle cx="699.1" cy="226.1" r="1.220"/><circle cx="701.3" cy="223.4" r="1.220"/><circle cx="703.7" cy="214.0" r="1.220"/><circle cx="705.9" cy="215.8" r="1.220"/><circle cx="708.1" cy="232.2" r="1.220"/><circle cx="710.5" cy="225.8" r="1.220"/><circle cx="712.6" cy="231.7" r="1.220"/><circle cx="715.0" cy="213.5" r="1.220"/><circle cx="717.2" cy="219.5" r="1.220"/><circle cx="719.4" cy="213.0" r="1.220"/><circle cx="721.8" cy="215.7" r="1.220"/><circle cx="724.0" cy="230.0" r="1.220"/><circle cx="726.3" cy="243.9" r="1.220"/><circle cx="728.5" cy="230.9" r="1.220"/><circle cx="730.7" cy="225.3" r="1.220"/><circle cx="733.1" cy="224.1" r="1.220"/><circle cx="735.3" cy="227.7" r="1.220"/><circle cx="737.7" cy="218.2" r="1.220"/><circle cx="739.9" cy="218.4" r="1.220"/><circle cx="742.1" cy="221.9" r="1.220"/><circle cx="744.4" cy="219.2" r="1.220"/><circle cx="746.6" cy="223.6" r="1.220"/><circle cx="749.0" cy="218.0" r="1.220"/><circle cx="751.2" cy="211.1" r="1.220"/><circle cx="753.6" cy="209.7" r="1.220"/><circle cx="755.7" cy="206.2" r="1.220"/><circle cx="757.9" cy="213.3" r="1.220"/><circle cx="760.3" cy="222.1" r="1.220"/><circle cx="762.5" cy="216.7" r="1.220"/><circle cx="764.9" cy="217.7" r="1.220"/><circle cx="767.1" cy="219.0" r="1.220"/><circle cx="769.3" cy="222.8" r="1.220"/><circle cx="771.6" cy="225.3" r="1.220"/><circle cx="773.8" cy="214.5" r="1.220"/><circle cx="776.0" cy="218.5" r="1.220"/><circle cx="778.4" cy="208.9" r="1.220"/><circle cx="780.6" cy="218.0" r="1.220"/><circle cx="783.0" cy="215.7" r="1.220"/><circle cx="785.2" cy="215.5" r="1.220"/><circle cx="787.5" cy="219.5" r="1.220"/><circle cx="789.7" cy="225.8" r="1.220"/><circle cx="791.9" cy="230.0" r="1.220"/><circle cx="794.3" cy="221.7" r="1.220"/><circle cx="796.5" cy="225.5" r="1.220"/><circle cx="798.9" cy="224.1" r="1.220"/><circle cx="801.1" cy="218.4" r="1.220"/><circle cx="803.4" cy="228.5" r="1.220"/><circle cx="805.6" cy="219.7" r="1.220"/><circle cx="807.8" cy="211.3" r="1.220"/><circle cx="810.2" cy="221.4" r="1.220"/><circle cx="812.4" cy="213.3" r="1.220"/><circle cx="814.8" cy="219.4" r="1.220"/><circle cx="817.0" cy="222.9" r="1.220"/><circle cx="819.3" cy="220.7" r="1.220"/><circle cx="821.5" cy="213.6" r="1.220"/><circle cx="823.7" cy="219.9" r="1.220"/><circle cx="826.1" cy="219.7" r="1.220"/><circle cx="828.3" cy="225.5" r="1.220"/><circle cx="830.7" cy="227.8" r="1.220"/><circle cx="832.9" cy="231.6" r="1.220"/><circle cx="835.1" cy="220.4" r="1.220"/><circle cx="837.4" cy="217.9" r="1.220"/><circle cx="839.6" cy="229.0" r="1.220"/><circle cx="842.0" cy="219.0" r="1.220"/><circle cx="844.2" cy="209.2" r="1.220"/><circle cx="846.6" cy="215.0" r="1.220"/><circle cx="848.8" cy="224.5" r="1.220"/><circle cx="851.0" cy="241.7" r="1.220"/><circle cx="853.3" cy="232.9" r="1.220"/><circle cx="855.5" cy="220.4" r="1.220"/><circle cx="857.9" cy="216.2" r="1.220"/><circle cx="860.0" cy="219.5" r="1.220"/><circle cx="862.2" cy="237.4" r="1.220"/><circle cx="864.6" cy="218.8" r="1.220"/><circle cx="866.8" cy="225.1" r="1.220"/><circle cx="868.9" cy="215.3" r="1.220"/><circle cx="871.3" cy="209.5" r="1.220"/><circle cx="873.6" cy="219.1" r="1.220"/><circle cx="875.9" cy="221.2" r="1.220"/><circle cx="879.2" cy="215.8" r="1.220"/><circle cx="881.4" cy="209.9" r="1.220"/><circle cx="883.7" cy="227.5" r="1.220"/><circle cx="885.9" cy="218.8" r="1.220"/><circle cx="888.3" cy="221.6" r="1.220"/><circle cx="890.5" cy="215.0" r="1.220"/><circle cx="892.9" cy="208.6" r="1.220"/><circle cx="896.3" cy="211.7" r="1.220"/><circle cx="898.4" cy="230.1" r="1.220"/><circle cx="900.7" cy="229.1" r="1.220"/><circle cx="903.0" cy="215.1" r="1.220"/><circle cx="905.4" cy="229.5" r="1.220"/><circle cx="907.5" cy="225.3" r="1.220"/><circle cx="909.7" cy="216.6" r="1.220"/><circle cx="912.2" cy="227.9" r="1.220"/><circle cx="914.5" cy="220.5" r="1.220"/></g>
<rect x="293" y="346.300" width="8" height="8" rx="1.500" fill="#1f77b4"/>
<text x="303.500" y="353.100" font-size="9.200" fill="#222" id="lg1">Downlink</text>
<rect x="356.200" y="346.300" width="8" height="8" rx="1.500" fill="#ff7f0e"/>
<text x="366.300" y="353.100" font-size="9.200" fill="#222" id="lg2">Uplink</text>
</svg>

<div id="side" class="abs"></div>
<div class="abs" style="left:23px;top:146px;width:188px;height:1px;background:#ddd"></div>
<div class="abs" style="left:23px;top:176px;width:188px;height:1px;background:#ddd"></div>
<div class="abs" style="left:23px;top:206px;width:188px;height:1px;background:#ddd"></div>
<div class="abs" style="left:23px;top:236px;width:188px;height:1px;background:#ddd"></div>
<div class="abs" style="left:23px;top:266px;width:188px;height:1px;background:#ddd"></div>
<div class="abs" style="left:23px;top:296px;width:188px;height:1px;background:#ddd"></div>
<div class="abs" style="left:23px;top:386px;width:188px;height:1px;background:#ddd"></div>
<div class="abs" style="left:23px;top:416px;width:188px;height:1px;background:#ddd"></div>
<div class="abs" style="left:22.400px;top:326px;width:189.300px;height:30.400px;background:linear-gradient(#0551a1,#02438d 50%,#00306b)"></div>
<svg class="abs" style="left:38px;top:121px" width="16" height="17" viewBox="0 0 16 17"><path d="M.9 10.400H3.900L5.300 3.200 7.200 14.800 9.400 1.200 11.100 10.400H14.600" stroke="#444" stroke-width="1.700" fill="none" stroke-linejoin="round"/></svg>
<svg class="abs" style="left:38px;top:211px" width="16" height="17" viewBox="0 0 16 17"><path d="M.9 10.400H3.900L5.300 3.200 7.200 14.800 9.400 1.200 11.100 10.400H14.600" stroke="#444" stroke-width="1.700" fill="none" stroke-linejoin="round"/></svg>
<svg class="abs" style="left:37px;top:151px" width="17" height="17" viewBox="0 0 17 17"><circle cx="12.300" cy="1.800" r="1.450" fill="#444"/><path d="M10.600 3.600L8.700 8.800" stroke="#444" stroke-width="3" fill="none" stroke-linecap="round"/><path d="M11 4.200l2.500 2.300 2.200-2.300" stroke="#444" stroke-width="1.400" fill="none" stroke-linecap="round" stroke-linejoin="round"/><path d="M9.800 3.500L6.200 4.300 5.300 6.500" stroke="#444" stroke-width="1.500" fill="none" stroke-linecap="round" stroke-linejoin="round"/><path d="M8.500 9L5.700 10.600H1.200" stroke="#444" stroke-width="2" fill="none" stroke-linecap="round" stroke-linejoin="round"/><path d="M9.300 8.600l1.800 2.600-1.300 4.500" stroke="#444" stroke-width="2" fill="none" stroke-linecap="round" stroke-linejoin="round"/></svg>
<svg class="abs" style="left:36px;top:181px" width="18" height="17" viewBox="0 0 18 17"><path d="M17.00 6.71L17.00 10.29L15.08 10.16L14.47 11.62L15.92 12.89L13.39 15.42L12.12 13.97L10.66 14.58L10.79 16.50L7.21 16.50L7.34 14.58L5.88 13.97L4.61 15.42L2.08 12.89L3.53 11.62L2.92 10.16L1.00 10.29L1.00 6.71L2.92 6.84L3.53 5.38L2.08 4.11L4.61 1.58L5.88 3.03L7.34 2.42L7.21 0.50L10.79 0.50L10.66 2.42L12.12 3.03L13.39 1.58L15.92 4.11L14.47 5.38L15.08 6.84zM12.10 8.50A3.1 3.1 0 1 0 5.90 8.50A3.1 3.1 0 1 0 12.10 8.50z" fill="#444" fill-rule="evenodd"/></svg>
<svg class="abs" style="left:58px;top:241px" width="19" height="17" viewBox="0 0 19 17"><path d="M3.650 14.950A7.850 7.850 0 1 1 14.750 14.950" stroke="#444" stroke-width="1.900" fill="none"/><path d="M5.030 7.460A4.600 4.600 0 0 1 13.370 7.460" stroke="#444" stroke-width="2.100" fill="none"/><path d="M9.300 10.700L7.900 9.300 9.300 7.900 11.400 7.300 10.700 9.300z" fill="#444"/></svg>
<svg class="abs" style="left:59px;top:271px" width="17" height="17" viewBox="0 0 17 17"><rect x=".85" y="3.500" width="15.500" height="12.300" rx="1.800" fill="none" stroke="#444" stroke-width="1.500"/><path d="M3 8.800h2.300L6.600 .8 8 12l1.500-7 .9 3.800h2.800" stroke="#444" stroke-width="1.300" fill="none" stroke-linejoin="round"/><path d="M2.500 12.800h4.500M10.300 12.800h4" stroke="#444" stroke-width="2" fill="none" stroke-dasharray="1.300 .5"/></svg>
<svg class="abs" style="left:58px;top:301px" width="19" height="15" viewBox="0 0 19 15"><path d="M1.300 5.200Q9.500-1.800 17.700 5.200" stroke="#444" stroke-width="1.900" fill="none" stroke-linecap="round"/><path d="M4 8Q9.500 3.200 15 8" stroke="#444" stroke-width="1.800" fill="none" stroke-linecap="round"/><path d="M6.700 10.600Q9.500 8.300 12.300 10.600" stroke="#444" stroke-width="1.700" fill="none" stroke-linecap="round"/><circle cx="9.500" cy="13" r="1.500" fill="#444"/></svg>
<svg class="abs" style="left:59px;top:332px" width="17" height="15" viewBox="0 0 17 15"><rect x="0" y="6.100" width="3.900" height="5.800" fill="#fff"/><rect x="5" y="4" width="3" height="7.900" fill="#fff"/><rect x="7.900" y="1.100" width="5.300" height="10.800" fill="#fff"/><rect x="13.100" y="8.200" width="3.500" height="3.700" fill="#fff"/><rect x="0" y="12.700" width="16.600" height="1.300" fill="#cdd9ec"/></svg>
<svg class="abs" style="left:59px;top:361px" width="16" height="17" viewBox="0 0 16 17"><circle cx="7" cy="6.500" r="5.700" fill="none" stroke="#444" stroke-width="1.150"/><path d="M2.300 5c1.300-.6 2.600-.2 3.200.7.300.9-.8 1.300-.4 2.200.4.700-.2 1.500-.8 2.200C3.300 9.300 2.500 7.500 2.300 5z" fill="#444"/><path d="M8.200 1.500c1.300.1 2.500.8 3.300 1.800-.7.700-1.600.5-2 1.100.7.400 1.600.3 2 .9.200.8-.3 1.900-1.200 2.700-.3-.8-.7-1.400-1.400-1.700-.7-.4-.5-1.300.1-1.800-.6-.7-1-1.700-.8-3z" fill="#444"/><path d="M11.800 9.800c1.700.9 2.700 2 2.700 2.900 0 .8-1.200 1.200-3 .8" stroke="#444" stroke-width="1.100" fill="none"/><ellipse cx="7.600" cy="14.900" rx="3.200" ry="1.200" fill="#444"/><path d="M7.800 14.500l3.700-1" stroke="#444" stroke-width="1.100"/></svg>
<div class="abs" style="left:57.500px;top:393.5px;width:19.2px;height:2.200px;background:#484848"></div>
<div class="abs" style="left:57.500px;top:397px;width:11.5px;height:2.200px;background:#484848"></div>
<div class="abs" style="left:57.500px;top:400.5px;width:19.2px;height:2.200px;background:#484848"></div>
<div class="abs" style="left:57.500px;top:404px;width:12.5px;height:2.200px;background:#484848"></div>
<svg class="abs" style="left:36px;top:420px" width="19" height="19" viewBox="0 0 19 19"><path d="M16.800 1.300a4.600 4.600 0 0 0-6 5.600L1.500 15a1.800 1.800 0 0 0 2.500 2.600l8.300-9.200a4.600 4.600 0 0 0 5.900-3.900l-2.700 1.400-2-1.200-.2-2.400z" fill="#444"/><circle cx="2.900" cy="16.100" r=".7" fill="#fff"/></svg>
<div class="t" id="s_status" style="left:56.3px;top:127.3px;font-size:9px;color:#555;letter-spacing:0.264px">Status</div>
<div class="t" id="s_inst" style="left:56.5px;top:157.3px;font-size:9px;color:#555;letter-spacing:0.306px">Installation</div>
<div class="t" id="s_conf" style="left:60px;top:187.3px;font-size:9px;color:#555;letter-spacing:0.035px">Configuration</div>
<div class="t" id="s_mon" style="left:60px;top:217.3px;font-size:9px;color:#555;font-weight:bold;color:#444;letter-spacing:0.2px">Monitor</div>
<div class="t" id="s_perf" style="left:78.5px;top:247.3px;font-size:9px;color:#555;letter-spacing:0.234px">Performance</div>
<div class="t" id="s_sys" style="left:77.7px;top:277.3px;font-size:9px;color:#555;letter-spacing:-0.086px">System</div>
<div class="t" id="s_wl" style="left:79.3px;top:307.3px;font-size:9px;color:#555;letter-spacing:0.048px">Wireless</div>
<div class="t" id="s_tp" style="left:80px;top:337.3px;font-size:9px;color:#555;font-weight:bold;color:#fff;letter-spacing:0.032px">Throughput Chart</div>
<div class="t" id="s_net" style="left:78.7px;top:367.3px;font-size:9px;color:#555;letter-spacing:0.512px">Network</div>
<div class="t" id="s_log" style="left:77.6px;top:397.3px;font-size:9px;color:#555;letter-spacing:-0.113px">System Log</div>
<div class="t" id="s_tools" style="left:59.4px;top:427.3px;font-size:9px;color:#555;letter-spacing:-0.083px">Tools</div>
<svg class="abs" style="left:116.5px;top:190px" width="6" height="4" viewBox="0 0 6 4"><path d="M.3.500h5.400L3 3.500z" fill="#555"/></svg>
<svg class="abs" style="left:96.5px;top:220px" width="6" height="4" viewBox="0 0 6 4"><path d="M.3.500h5.400L3 3.500z" fill="#555"/></svg>
<svg class="abs" style="left:82px;top:430px" width="6" height="4" viewBox="0 0 6 4"><path d="M.3.500h5.400L3 3.500z" fill="#555"/></svg>

<div id="hdr" class="abs"></div>
<!-- logo -->
<svg class="abs" style="left:7px;top:76px" width="23" height="23" viewBox="0 0 23 23"><path d="M4.600 3.600C1.500 6.500.3 10.500 1.200 14.500 2.300 19.500 7 23 12 22.200 14 21.900 15.600 21.400 16.700 20.800 13 21.200 9 20 6.500 16.500 4 13 3.500 8 4.600 3.600z" fill="#fff"/><path d="M8.500 1.800C5 5 4.200 10 5.800 14.500 6.800 17 8.500 18.800 10.500 19.800 8.300 16.500 6.800 12 7.200 8 7.400 5.500 8.200 3.500 10 1.600z" fill="#fff"/><path d="M12 1.200C8.500 4 7.500 9 8.600 13.500 9.200 15.500 10 17 11.400 18.400 10.200 15 9.600 11 10.400 7.500 10.900 5 12 3 13.800 1.400z" fill="#fff"/><path d="M15.500 2C12.500 3.800 11 7 11.200 10.500 11.300 12 11.600 13 12.100 14 12 11 12.500 8 14 5.800 15 4.300 16 3.400 17.300 2.700z" fill="#fff"/><path d="M16 6C19 5.200 21.600 6.800 21.800 10 22 13.500 20.500 17.500 17.500 18.200 14.500 18.800 12.200 16.500 12 13 11.800 9.500 13.300 6.700 16 6z" fill="#fff"/></svg>
<div class="t" id="cn" style="left:33.5px;top:77.6px;font-size:11px;font-weight:bold;color:#fff;letter-spacing:0.425px">Cambium Networks</div>
<div class="t" id="ptp" style="left:115px;top:91.5px;font-size:8.200px;color:#fff;letter-spacing:-0.531px">PTP 550</div>
<div class="sep" style="left:150.500px"></div>
<div class="t" id="devn" style="left:161.3px;top:84.3px;font-size:9px;color:#fff;letter-spacing:-0.22px">PTP550_26e055</div>
<div class="red" style="left:201.200px;top:83.200px;width:25px;height:4.500px"></div>
<div class="sep" style="left:236.500px"></div>
<div class="t" id="mst" style="left:247.3px;top:84.3px;font-size:9px;color:#fff;letter-spacing:0.197px">Master</div>
<!-- notification user -->
<svg class="abs" style="left:572px;top:80px" width="13" height="15" viewBox="0 0 13 15"><path d="M6.500 1C4.700 1 4 2.300 4 4c0 1.500.5 2.300 1 3-.2 1.500-1 1.800-2.500 2.300C1.300 9.700.8 10.300.8 11.500V14h11.400v-2.500c0-1.200-.5-1.800-1.700-2.200C9 8.800 8.200 8.500 8 7c.5-.7 1-1.500 1-3 0-1.700-.7-3-2.500-3z" fill="#9b9b9b"/></svg>
<svg class="abs" style="left:581px;top:73px" width="16" height="14" viewBox="0 0 16 14"><ellipse cx="7.800" cy="6.700" rx="7.300" ry="6" fill="#fff"/><text x="7.800" y="10.200" font-family="Liberation Sans, sans-serif" font-size="9.500" font-weight="bold" fill="#0d3a78" text-anchor="middle">1</text></svg>
<!-- globe -->
<svg class="abs" style="left:622px;top:78px" width="18" height="18" viewBox="0 0 18 18"><circle cx="8.900" cy="9.200" r="7.500" fill="none" stroke="#57c44a" stroke-width="1.200"/><path d="M3 6.500c1-2 2.500-3.500 4.800-4.300.8.300 1.200.8.500 1.500C7.300 4.500 6 5 5.500 6c1.500-.3 3 .2 3.800 1.200.5.800 0 1.800-.8 2.500-.3 1.300-.8 2.500-1.500 4-.4.800-1 .8-1.300 0C5 12.500 4.800 11 3.800 10 2.800 9 2.500 7.500 3 6.500z" fill="#57c44a"/><path d="M10 2c1.800.2 3.500 1 4.800 2.500-.5.500-1.300.3-1.800.8 1.300.3 2.500 1.200 3 2.700.3 2-.3 4-1.500 5.500-.8.800-1.500 1-2 .3-.3-.8.300-1.800-.300-2.600-.8-1-2.200-1.200-2.500-2.500-.2-1 .5-1.800 1.500-2.200-.8-.5-1.500-1.200-1.500-2.200 0-.8-.2-1.500.3-2.300z" fill="#57c44a"/></svg>
<!-- pin -->
<svg class="abs" style="left:656px;top:78px" width="15" height="19" viewBox="0 0 15 19"><path d="M7.500 1.600C4.200 1.600 1.600 4 1.600 7.200c0 3.300 3 6.500 5.900 10.100 2.900-3.600 5.900-6.800 5.900-10.100 0-3.200-2.600-5.600-5.900-5.600z" fill="none" stroke="#a5a29b" stroke-width="1.150"/><circle cx="7.400" cy="7.200" r="2.300" fill="#a5a29b"/></svg>
<!-- buttons -->
<div class="hbtn" style="left:688.300px;background:linear-gradient(#a9c0de,#8dabd1);border-color:#7f9dc6"></div>
<div class="hbtn" style="left:728.400px"></div>
<div class="hbtn" style="left:768.800px"></div>
<div class="hbtn" style="left:808.900px"></div>
<div class="hbtn" style="left:849.100px"></div>
<svg class="abs" style="left:700px;top:82px" width="10" height="12" viewBox="0 0 10 12"><path d="M5 .3C2.400.3.800 2 .8 4.200c0 1.500.9 2.400 1.600 3.300.4.500.5 1 .5 1.500h4.200c0-.5.100-1 .5-1.500.7-.9 1.600-1.800 1.600-3.300C9.200 2 7.600.3 5 .3z" fill="#1f4170"/><rect x="3" y="9.400" width="4" height="1" fill="#1f4170"/><rect x="3.500" y="10.700" width="3" height="1" fill="#1f4170"/></svg>
<svg class="abs" style="left:739px;top:82px" width="13" height="12" viewBox="0 0 13 12"><path d="M1.200 4.500L6.300 .9V8.100z" fill="#222"/><path d="M5.800 4.400C9.500 4 11.300 6 10.600 8.500 10.300 9.700 9.600 10.500 8.600 11.200" stroke="#222" stroke-width="2" fill="none"/></svg>
<svg class="abs" style="left:780px;top:83px" width="12" height="11" viewBox="0 0 12 11"><path d="M.8.500h8.400l2 2v8H.8z" fill="#222"/><rect x="3" y=".5" width="5" height="3.200" fill="#f4f4f4"/><rect x="6" y="1" width="1.300" height="2.200" fill="#222"/><rect x="2.500" y="6" width="7" height="3.500" fill="#f4f4f4"/></svg>
<svg class="abs" style="left:820px;top:80px" width="12" height="14" viewBox="0 0 12 14"><path d="M.8 3.500h8.400l2 2v8H.8z" fill="#222"/><rect x="4.800" y=".3" width="2.400" height="6" fill="#222"/><path d="M3 5.800h6L6 9.300z" fill="#222"/><rect x="3" y="3.500" width="1.600" height="4" fill="#f4f4f4"/><rect x="7.400" y="3.500" width="1.600" height="4" fill="#f4f4f4"/><rect x="3" y="10" width="6" height="2.500" fill="#f4f4f4"/><rect x="5.500" y="10" width="1" height="2.500" fill="#222"/></svg>
<svg class="abs" style="left:860px;top:82px" width="13" height="13" viewBox="0 0 13 13"><path d="M4 2.800A4.700 4.700 0 1 0 9 2.800" stroke="#222" stroke-width="1.600" fill="none" stroke-linecap="round"/><path d="M6.500.8v5" stroke="#222" stroke-width="1.600" fill="none" stroke-linecap="round"/></svg>
<!-- admin -->
<svg class="abs" style="left:896px;top:83px" width="12" height="11" viewBox="0 0 12 11"><path d="M6 .3C4.400.3 3.700 1.400 3.700 2.800c0 1.200.4 1.900.9 2.500-.2 1.200-.9 1.500-2.200 1.900C1.300 7.500.8 8 .8 9v1.700h10.400V9c0-1-.5-1.500-1.600-1.800-1.300-.4-2-.7-2.200-1.900.5-.6.900-1.300.9-2.500C8.300 1.400 7.600.3 6 .3z" fill="#fff"/></svg>
<div class="t" id="adm" style="left:911.5px;top:84.5px;font-size:9px;color:#fff;letter-spacing:0.191px">Administrator</div>
<svg class="abs" style="left:970.500px;top:86.700px" width="8" height="5" viewBox="0 0 8 5"><path d="M.8.800h6.400L4 4.200z" fill="#fff"/></svg>

<div id="sb" class="abs"></div>
<div id="thumb" class="abs"></div>
<svg class="abs" style="left:990.500px;top:75px" width="7" height="4" viewBox="0 0 7 4"><path d="M3.500 .3L6.800 3.700H.2z" fill="#505050"/></svg>
<svg class="abs" style="left:990.500px;top:502.500px" width="7" height="4" viewBox="0 0 7 4"><path d="M3.500 3.700L6.800 .3H.2z" fill="#a8a8a8"/></svg>

<div id="status" class="abs"></div>
<div id="bottom" class="abs"></div>
<div class="abs" style="left:848px;top:516px;width:1.200px;height:9px;background:#d0daee"></div>
<div class="abs" style="left:852px;top:516px;width:1.200px;height:9px;background:#d0daee"></div>
<svg class="abs" style="left:859px;top:515px" width="13" height="11" viewBox="0 0 13 11"><path d="M1 3.800h2.300L6.500 1v9L3.300 7.200H1z" fill="#555"/><path d="M8 3.500q1.300 2 0 4" stroke="#555" stroke-width="1" fill="none"/><path d="M9.800 2q2.300 3.500 0 7" stroke="#888" stroke-width=".9" fill="none"/></svg>
<svg class="abs" style="left:882px;top:515px" width="11" height="11" viewBox="0 0 11 11"><path d="M6.300 1.300h3.400v3.400M9.700 1.300L6.300 4.700M4.700 9.700H1.300V6.300M1.300 9.700l3.400-3.400" stroke="#666" stroke-width="1" fill="none"/></svg>
<svg class="abs" style="left:903px;top:515px" width="12" height="11" viewBox="0 0 12 11"><rect x="1.400" y="1.300" width="9.600" height="8.400" fill="none" stroke="#555" stroke-width=".9"/><path d="M4.600 1.300v8.400M7.800 1.300v8.400" stroke="#555" stroke-width=".9"/></svg>
<div class="abs" style="left:921.500px;top:516px;width:1.200px;height:9px;background:#d0daee"></div>
<div class="abs" style="left:932px;top:519.300px;width:5.800px;height:1.400px;background:#444"></div>
<div class="t" id="st_pct" style="left:952px;top:515.200px;font-size:9.500px;color:#2a2a2a;-webkit-text-stroke:.3px #2a2a2a;transform-origin:0 0;transform:scaleX(.823)">100%</div>
<div class="abs" style="left:987px;top:519.300px;width:6px;height:1.400px;background:#444"></div>
<div class="abs" style="left:989.200px;top:517.200px;width:1.400px;height:6px;background:#444"></div>

</body></html>
